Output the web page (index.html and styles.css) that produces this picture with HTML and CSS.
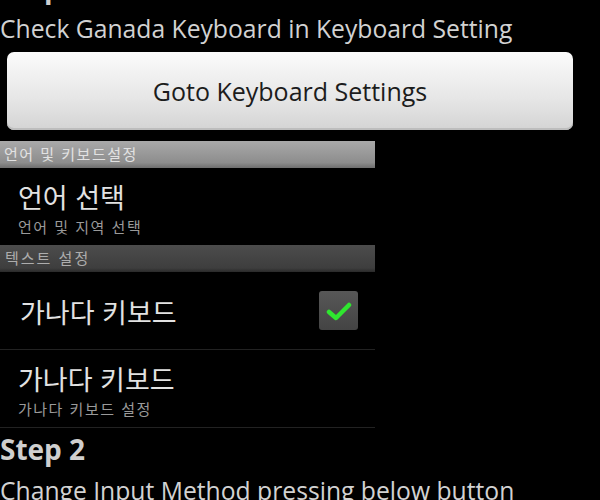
FILE: index.html
```html
<!DOCTYPE html>
<html lang="ko">
<head>
    <meta charset="UTF-8">
    <meta name="viewport" content="width=device-width, initial-scale=1.0">
    <title>Ganada Keyboard Setup</title>
    <link rel="stylesheet" href="styles.css">
</head>
<body>

    <!-- Step 1 -->
    <div class="step first-step">
        <h2 class="step-title">Step 1</h2>
        <p class="step-desc">Check Ganada Keyboard in Keyboard Setting</p>
        <button class="big-button">Goto Keyboard Settings</button>
    </div>

    <!-- Settings preview -->
    <div class="settings-preview">
        <div class="pref-header light">언어 및 키보드설정</div>
        <div class="pref-item">
            <div class="pref-text">
                <div class="pref-title">언어 선택</div>
                <div class="pref-summary">언어 및 지역 선택</div>
            </div>
        </div>
        <div class="pref-header dark">텍스트 설정</div>
        <div class="pref-item single">
            <div class="pref-text">
                <div class="pref-title">가나다 키보드</div>
            </div>
            <span class="check-box">
                <svg width="26" height="22" viewBox="0 0 26 22">
                    <path d="M3 12 L10 18 L23 5" fill="none" stroke="#2fe62f" stroke-width="4.5" stroke-linecap="round" stroke-linejoin="round"/>
                </svg>
            </span>
        </div>
        <div class="pref-item">
            <div class="pref-text">
                <div class="pref-title">가나다 키보드</div>
                <div class="pref-summary">가나다 키보드 설정</div>
            </div>
        </div>
    </div>

    <!-- Step 2 -->
    <div class="step second-step">
        <h2 class="step-title">Step 2</h2>
        <p class="step-desc">Change Input Method pressing below button</p>
    </div>

</body>
</html>
```

FILE: styles.css
```css
body {
    margin: 0;
    background-color: #000;
    color: #d6d6d6;
    font-family: "Open Sans", "Noto Sans CJK KR", sans-serif;
    overflow: hidden;
}
.first-step {
    margin-top: -32px;
}
.second-step {
    margin-top: 2px;
}
.step-title {
    margin: 0;
    font-size: 28px;
    font-weight: bold;
    line-height: 38px;
    color: #cfcfcf;
}
.step-desc {
    margin: 6px 0 0;
    font-size: 24.7px;
    line-height: 34px;
    color: #d2d2d2;
}
.big-button {
    display: block;
    width: 566px;
    height: 78px;
    margin: 6px 0 0 7px;
    border: none;
    border-radius: 7px;
    background: linear-gradient(#fbfbfb, #e6e6e6 60%, #d4d4d4);
    color: #1c1c1c;
    font-family: "Open Sans", sans-serif;
    font-size: 25px;
    box-shadow: inset 0 -2px 0 #bdbdbd;
}
.settings-preview {
    width: 375px;
    margin-top: 11px;
    font-family: "Noto Sans CJK KR", sans-serif;
}
.pref-header {
    height: 27px;
    padding-left: 4px;
    font-size: 15px;
    letter-spacing: 1.5px;
    line-height: 25px;
}
.pref-header.light {
    background: linear-gradient(#a9a9a9, #8d8d8d 80%, #6e6e6e);
    color: #e2e2e2;
}
.pref-header.dark {
    padding-left: 5px;
    letter-spacing: 2px;
    background: linear-gradient(#4c4c4c, #3e3e3e 85%, #2a2a2a);
    color: #adadad;
}
.pref-item {
    display: flex;
    align-items: center;
    justify-content: space-between;
    height: 77px;
    padding: 0 17px 0 18px;
}
.pref-item + .pref-item {
    border-top: 1px solid #222;
}
.pref-item:last-child {
    border-bottom: 1px solid #222;
}
.pref-text {
    margin-top: 2px;
}
.pref-title {
    font-size: 27px;
    line-height: 39px;
    color: #e2e2e2;
}
.pref-summary {
    font-size: 15px;
    letter-spacing: 1.5px;
    line-height: 22px;
    color: #9a9a9a;
}
.single .pref-title {
    padding-left: 2px;
}
.check-box {
    display: flex;
    align-items: center;
    justify-content: center;
    width: 39px;
    height: 39px;
    border-radius: 3px;
    background: linear-gradient(#575757, #444);
}
```
